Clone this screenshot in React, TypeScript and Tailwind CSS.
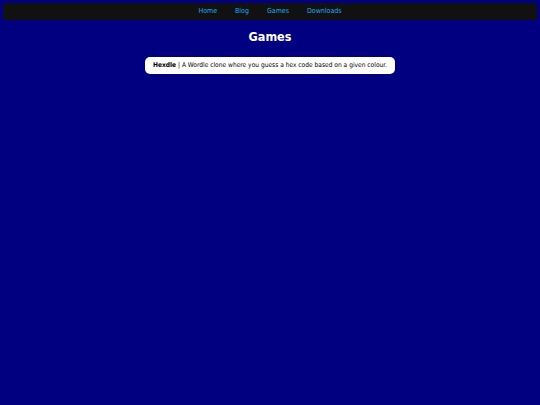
export default function App() {
  return (
    <div className="min-h-[405px] bg-[#000080] p-[3px] font-['DejaVu_Sans_Condensed','DejaVu_Sans',sans-serif]">
      <nav className="flex h-[17px] items-center justify-center gap-[18px] bg-[#111111] text-[7px] font-normal">
        <a className="text-[#22aaee]">Home</a>
        <a className="text-[#22aaee]">Blog</a>
        <a className="text-[#22aaee]">Games</a>
        <a className="text-[#22aaee]">Downloads</a>
      </nav>
      <h1 className="mt-[9px] text-center text-[12.5px] leading-[16px] font-bold text-white">Games</h1>
      <div className="mt-[12px] flex justify-center">
        <div className="rounded-[5px] bg-white px-[8px] py-[4px] text-[6.6px] leading-[9px] text-black">
          <b>Hexdle</b> | A Wordle clone where you guess a hex code based on a given colour.
        </div>
      </div>
    </div>
  );
}
